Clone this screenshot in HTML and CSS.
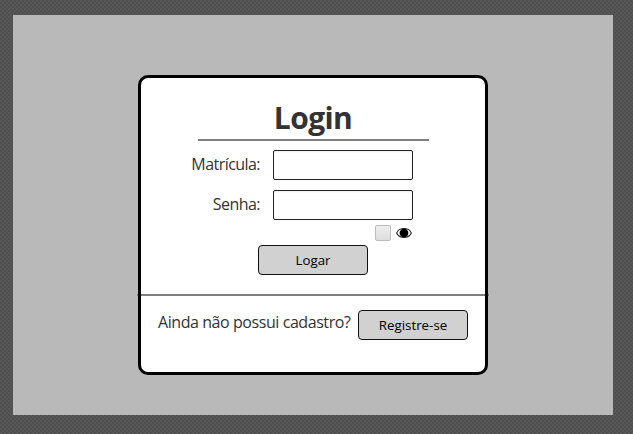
FILE: index.html
```html
<!DOCTYPE html>
<html lang="pt-BR">
<head>
<meta charset="utf-8">
<title>Login</title>
<link rel="stylesheet" href="styles.css">
</head>
<body>
<main class="panel">
  <section class="card">
    <form class="login">
      <h1 class="title">Login</h1>
      <div class="field"><label for="matricula">Matrícula:</label><input id="matricula" type="text"></div>
      <div class="field"><label for="senha">Senha:</label><input id="senha" type="password"></div>
      <div class="reveal">
        <span class="check"></span>
        <svg class="eye" width="16" height="12" viewBox="0 0 16 12"><path d="M.7 6Q2.5 1.5 8 1.5T15.3 6Q13.5 10.5 8 10.5T.7 6Z" fill="#fff" stroke="#333" stroke-width="1.2"/><circle cx="8" cy="6" r="4.4" fill="#000"/></svg>
      </div>
      <button class="button" type="button">Logar</button>
    </form>
    <div class="register">
      <span class="question">Ainda não possui cadastro?</span>
      <button class="button" type="button">Registre-se</button>
    </div>
  </section>
</main>
</body>
</html>
```
FILE: styles.css
```css
* { box-sizing: border-box; }
body {
  margin: 0;
  padding: 15px 20px 19px 13px;
  height: 434px;
  overflow: hidden;
  background-color: #4e4e4e;
  background-image: radial-gradient(circle at 1px 1px, #5c5c5c 0.6px, transparent 1px), radial-gradient(circle at 3px 3px, #5c5c5c 0.6px, transparent 1px);
  background-size: 4px 4px;
  font: 16px/22px "Open Sans", "Noto Sans", sans-serif;
  color: #333;
}
.panel {
  width: 600px;
  height: 400px;
  padding: 60px 125px 40px;
  background: #b9b9b9;
}
.card {
  width: 350px;
  height: 300px;
  border: 3px solid #000;
  border-radius: 10px;
  background: #fff;
}
.login {
  height: 216px;
  display: flex;
  flex-direction: column;
  align-items: center;
}
.title {
  width: 231px;
  height: 63px;
  margin: 0 0 9px;
  padding-top: 18px;
  border-bottom: 2px solid #808080;
  text-align: center;
  font-size: 30px;
  line-height: 43px;
  font-weight: 700;
  letter-spacing: -0.6px;
}
.field {
  display: flex;
  width: 100%;
  height: 30px;
  margin-bottom: 10px;
}
.field label {
  width: 119px;
  margin-right: 13px;
  padding-top: 3px;
  text-align: right;
  white-space: nowrap;
  letter-spacing: -0.55px;
}
.field input {
  width: 140px;
  height: 30px;
  border: 1px solid #222;
  border-radius: 2px;
  background: #fff;
  box-shadow: inset 0 1px 2px #eee;
}
.reveal {
  display: flex;
  align-items: center;
  align-self: flex-start;
  gap: 5px;
  height: 16px;
  margin: -5px 0 4px 234px;
}
.check {
  width: 16px;
  height: 16px;
  border: 1px solid #bcbcbc;
  border-radius: 2px;
  background: linear-gradient(#eee, #ddd);
}
.button {
  flex: none;
  width: 110px;
  height: 30px;
  padding: 0;
  border: 1px solid #111;
  border-radius: 4px;
  background: #d1d1d1;
  color: #000;
  font: 13.33px/20px "Open Sans", "Noto Sans", sans-serif;
}
.register {
  display: flex;
  gap: 7px;
  height: 81px;
  margin: 0 -4px;
  padding: 16px 0 0 21px;
  background: linear-gradient(90deg, #808080 1px, #000 1px 4px, #808080 4px calc(100% - 4px), #000 calc(100% - 4px) calc(100% - 1px), #808080 calc(100% - 1px)) top / 100% 2px no-repeat;
}
.question {
  width: 193px;
  padding-top: 1px;
  white-space: nowrap;
  letter-spacing: -0.43px;
}
```
